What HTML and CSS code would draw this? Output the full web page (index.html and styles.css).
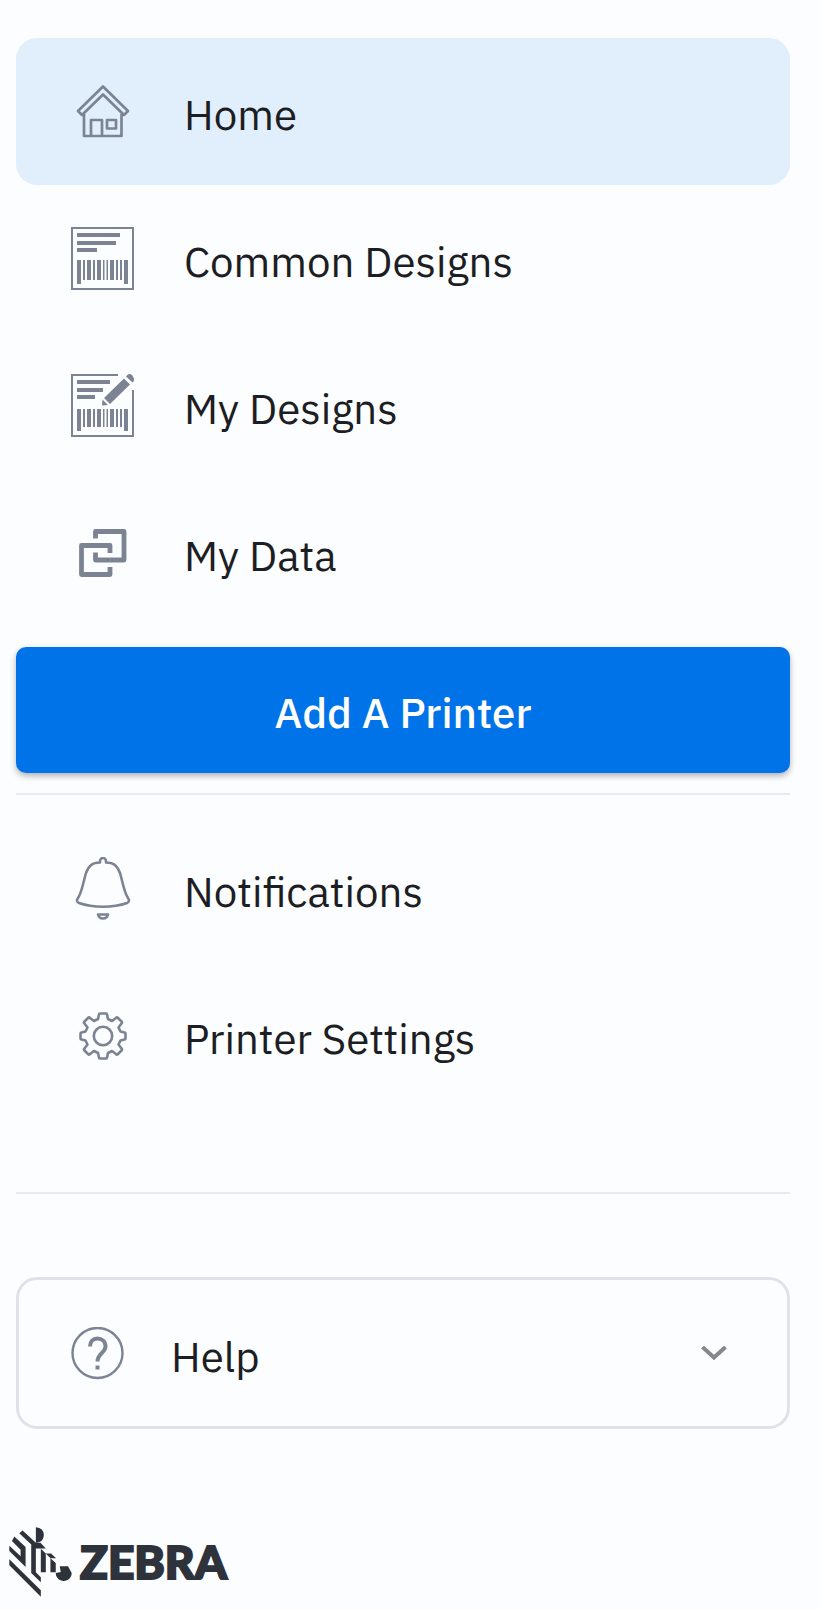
FILE: index.html
```html
<!DOCTYPE html>
<html lang="en">
<head>
<meta charset="utf-8">
<meta name="viewport" content="width=device-width, initial-scale=1">
<title>Zebra</title>
<link rel="stylesheet" href="styles.css">
</head>
<body>
<div class="sidebar">
  <nav class="menu">
    <a class="item active" href="#">
      <svg class="icon" viewBox="0 0 63 63" fill="none" stroke="currentColor" stroke-width="2.7" stroke-linejoin="round" aria-hidden="true">
        <path d="M32 6.500 7 31l4 4L32 14.500l21 20.500 4-4zM13 34v22h37.500V34M20 56V40h11v16M36 40h9v8.500h-9z"/>
      </svg>
      <span class="label">Home</span>
    </a>
    <a class="item" href="#">
      <svg class="icon" viewBox="0 0 63 63" fill="currentColor" aria-hidden="true">
        <path fill="none" stroke="currentColor" stroke-width="2" d="M1 1h61v61H1z"/>
        <path d="M6 6h43v4H6zM6 14h39v4H6zM6 21h20v4H6zM6 33h4v24H6zM12 33h2v20h-2zM16 33h4v20h-4zM22 33h2v20h-2zM26 33h4v20h-4zM32 33h1.500v20H32zM35.500 33H37v20h-1.500zM39 33h4v20h-4zM45 33h2v20h-2zM49 33h2v20h-2zM53 33h4v24h-4z"/>
      </svg>
      <span class="label">Common Designs</span>
    </a>
    <a class="item" href="#">
      <svg class="icon" viewBox="0 0 63 63" fill="currentColor" aria-hidden="true">
        <path fill="none" stroke="currentColor" stroke-width="2" d="M47 1H1v61h61V16"/>
        <path d="M6 6h33v4H6zM6 14h26v4H6zM6 21h18v4H6zM6 35h4v22H6zM12 35h2v18h-2zM16 35h4v18h-4zM22 35h2v18h-2zM26 35h4v18h-4zM32 35h1.500v18H32zM35.500 35H37v18h-1.500zM39 35h4v18h-4zM45 35h2v18h-2zM49 35h2v18h-2zM53 35h4v22h-4z"/>
        <path d="M53 4.500l6 6L39 30l-6-6zM31.500 25.500l5.500 5.500-6 .5zM55 2.500q3-4 6-1.500l1.500 2.500q1.500 3-1 5z"/>
      </svg>
      <span class="label">My Designs</span>
    </a>
    <a class="item" href="#">
      <svg class="icon" viewBox="0 0 63 63" fill="none" stroke="currentColor" stroke-width="4.800" stroke-linejoin="round" aria-hidden="true">
        <path d="M24.500 17.500v-7h28.500v28.500H24.500V31.500M39 32v-7.500H10.500V53.500H39V46"/>
      </svg>
      <span class="label">My Data</span>
    </a>
  </nav>
  <button class="add" type="button">Add A Printer</button>
  <nav class="menu secondary">
    <a class="item" href="#">
      <svg class="icon" viewBox="0 0 63 63" fill="none" stroke="currentColor" stroke-width="2.600" stroke-linejoin="round" aria-hidden="true">
        <path d="M29 5V4a3 3 0 0 1 6 0V5.500c8 0 11 3 14 10.500 3 10 4 19 8 25 1.500 2 1.500 4-1 5-14 5-34 5-48 0-2.500-1-2.500-3-1-5 4-6 5-15 8-25 3-7.500 6-10.500 14-10.500z"/>
        <path d="M27 57.500h10q-1 4-5 4t-5-4z"/>
      </svg>
      <span class="label">Notifications</span>
    </a>
    <a class="item" href="#">
      <svg class="icon" viewBox="0 0 63 63" fill="none" stroke="currentColor" stroke-width="2.600" stroke-linejoin="round" aria-hidden="true">
        <circle cx="32" cy="32" r="9.200"/>
        <path d="M28 10.500q0-1 1-1h6q1 0 1 1l1 4.500 4 2 4-3q1-1 2 0l3.500 3.500q1 1 0 2l-3 4 2 4 4 1q1 0 1 1v5q0 1-1 1l-4 1-2 4 3 4q1 1 0 2l-3.500 3.500q-1 1-2 0l-4-3-4 2-1 4.500q0 1-1 1h-6q-1 0-1-1l-1-4.500-4-2-4 3q-1 1-2 0l-3.500-3.500q-1-1 0-2l3-4-2-4-4-1q-1 0-1-1v-5q0-1 1-1l4-1 2-4-3-4q-1-1 0-2l3.500-3.500q1-1 2 0l4 3 4-2z"/>
      </svg>
      <span class="label">Printer Settings</span>
    </a>
  </nav>
  <button class="help" type="button" aria-expanded="false">
    <svg class="help-icon" viewBox="0 0 53 53" fill="none" stroke="currentColor" aria-hidden="true">
      <circle cx="26.500" cy="26" r="25" stroke-width="2.400"/>
      <path stroke-width="4" d="M19 19.500c0-5 3-8 7.500-8s8 3 8 8c0 6-8 7-8 15M24.500 40.500h4"/>
    </svg>
    <span class="label">Help</span>
    <svg class="chevron" viewBox="0 0 26 15" fill="none" stroke="currentColor" stroke-width="4" aria-hidden="true">
      <path d="M1.500 1 13 11.500 24.500 1"/>
    </svg>
  </button>
  <footer class="brand">
    <svg class="mark" viewBox="0 0 190 210" fill="currentColor" aria-hidden="true">
      <path d="M1 97 96 190v20L1 115zM16 28 50 60v60L1 72V56l34 32V68L9 42zM41 10l40 37h14l16 17H81v72l15 15v15L67 138V52L31 18zM81 0q24 2 24 23.500T81 47zM96 65l15 14v57H96zM111 79h16l15 15h-17zM125 94l16 14v28h-16zM141 138l15-3-3-17h25l11 20c0 14-11 24-24 24s-24-10-24-24z"/>
    </svg>
    <span class="wordmark">ZEBRA</span>
  </footer>
</div>
</body>
</html>
```
FILE: styles.css
```css
* {
  box-sizing: border-box;
}

body {
  margin: 0;
  background: #fbfdff;
  color: #1d1e23;
  font-family: "IBM Plex Sans", Roboto, sans-serif;
  font-size: 42px;
  line-height: 48px;
}

.sidebar {
  padding: 38px 30px 12px 16px;
}

.menu {
  display: flex;
  flex-direction: column;
}

.item {
  display: flex;
  align-items: center;
  gap: 50px;
  min-height: 147px;
  padding: 0 55px;
  border-radius: 21px;
  color: inherit;
  text-decoration: none;
}

.active {
  background: #e1effc;
}

.icon {
  flex: none;
  width: 63px;
  height: 63px;
  color: #7c8494;
}

.label {
  padding-top: 6px;
}

.add {
  display: block;
  width: 100%;
  margin: 21px 0 20px;
  padding: 42px 20px 36px;
  border: 0;
  border-radius: 10px;
  background: #0073e8;
  box-shadow: 0 3px 6px rgba(0, 0, 0, 0.3);
  color: #fff;
  font: inherit;
  font-weight: 500;
}

.secondary {
  padding: 20px 0 83px;
  border-top: 2px solid #e8eaf0;
  border-bottom: 2px solid #e8eaf0;
}

.help {
  display: flex;
  align-items: center;
  width: 100%;
  min-height: 152px;
  margin-top: 83px;
  padding: 0 60px 0 52px;
  border: 3px solid #e0e2ea;
  border-radius: 21px;
  background: transparent;
  color: inherit;
  font: inherit;
}

.help .label {
  padding-top: 8px;
}

.help-icon {
  width: 53px;
  height: 53px;
  margin-right: 47px;
  color: #7c8494;
}

.chevron {
  width: 26px;
  height: 15px;
  margin-left: auto;
  color: #85878d;
}

.brand {
  display: flex;
  align-items: center;
  gap: 8px;
  margin: 98px 0 0 -7px;
  color: #2e333b;
}

.mark {
  width: 63px;
  height: 70px;
}

.wordmark {
  font-family: Lato, sans-serif;
  font-size: 46px;
  font-weight: 900;
  -webkit-text-stroke: 2px currentColor;
}
```
